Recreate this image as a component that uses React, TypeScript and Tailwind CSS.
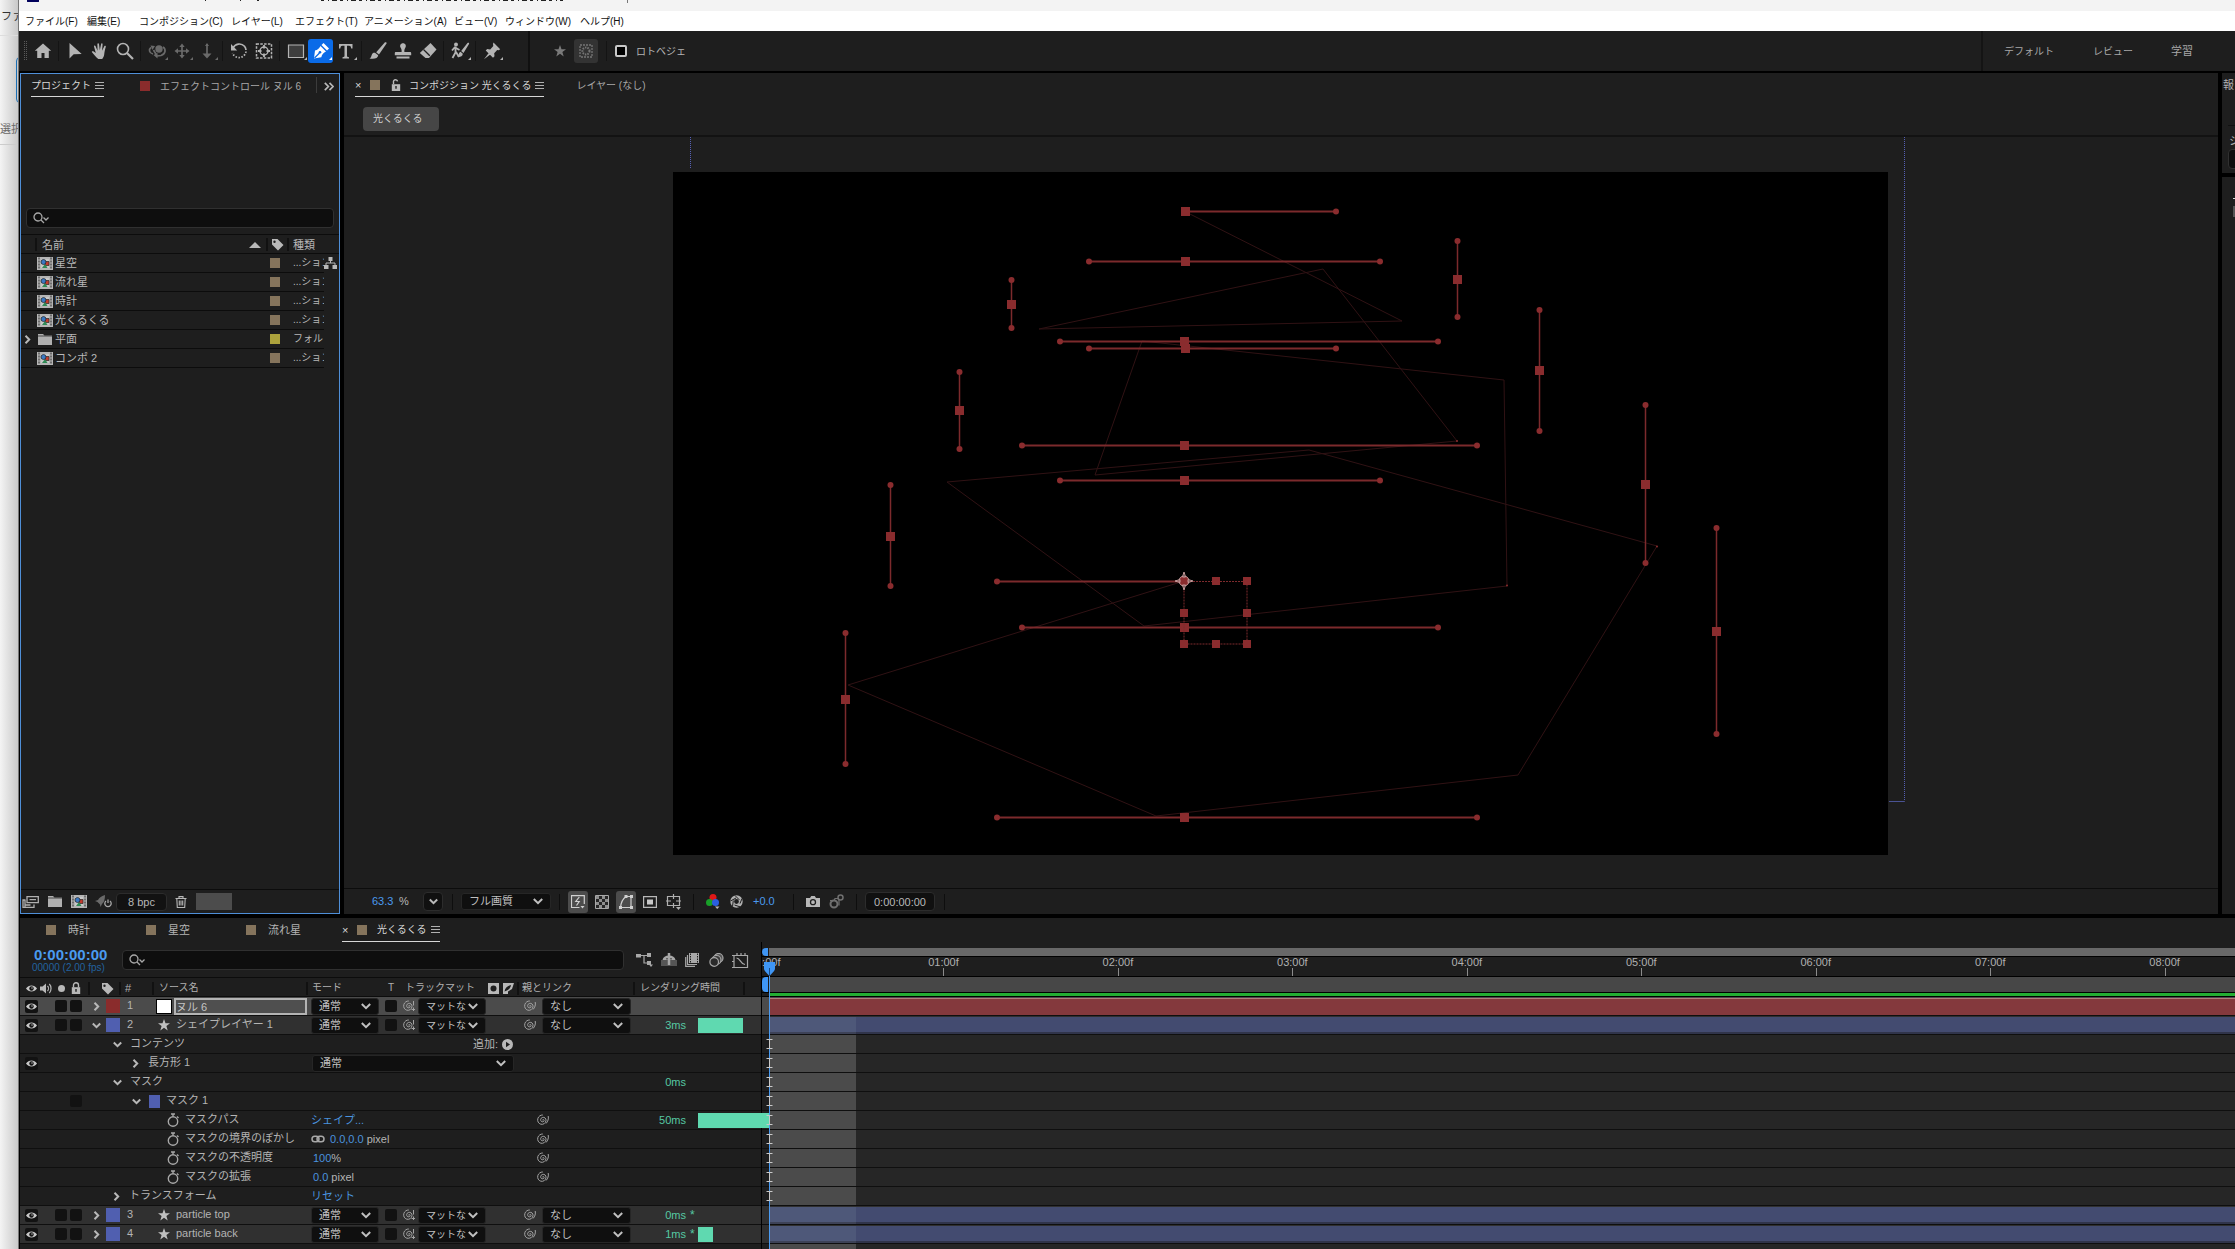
import React, { useState } from 'react';

interface ProjectItem {
  name: string;
  kind: string;
  folder?: boolean;
}

interface Layer {
  id: number;
  name: string;
  open?: boolean;
  isNull?: boolean;
  time?: string;
  cached?: boolean;
  bar?: string;
}

interface IconProps {
  className?: string;
}

const MENUS = [
  { label: 'ファイル(F)', width: 'w-[62px]' },
  { label: '編集(E)', width: 'w-[52px]' },
  { label: 'コンポジション(C)', width: 'w-[92px]' },
  { label: 'レイヤー(L)', width: 'w-[64px]' },
  { label: 'エフェクト(T)', width: 'w-[69px]' },
  { label: 'アニメーション(A)', width: 'w-[90px]' },
  { label: 'ビュー(V)', width: 'w-[51px]' },
  { label: 'ウィンドウ(W)', width: 'w-[75px]' },
  { label: 'ヘルプ(H)', width: 'w-[60px]' },
];

const ITEMS: ProjectItem[] = [
  { name: '星空', kind: '...ション' },
  { name: '流れ星', kind: '...ション' },
  { name: '時計', kind: '...ション' },
  { name: '光くるくる', kind: '...ション' },
  { name: '平面', kind: 'フォル', folder: true },
  { name: 'コンポ 2', kind: '...ション' },
];

const TIMES = ['01:00f', '02:00f', '03:00f', '04:00f', '05:00f', '06:00f', '07:00f', '08:00f'];

// [from, handle, to, fixed coordinate]
const H_HANDLES = [
  [1185, 1185, 1336, 211],
  [1089, 1185, 1380, 261],
  [1060, 1184, 1438, 341],
  [1089, 1185, 1336, 348],
  [1022, 1184, 1477, 445],
  [1060, 1184, 1380, 480],
  [1022, 1184, 1438, 627],
  [997, 1184, 1477, 817],
];

const V_HANDLES = [
  [241, 279, 317, 1457],
  [280, 304, 328, 1011],
  [310, 370, 431, 1539],
  [372, 410, 449, 959],
  [485, 536, 586, 890],
  [405, 484, 563, 1645],
  [528, 631, 734, 1716],
  [633, 699, 764, 845],
];

const BOX_POINTS = [
  [1184, 581], [1216, 581], [1247, 581],
  [1184, 613], [1247, 613],
  [1184, 644], [1216, 644], [1247, 644],
];

const PATH =
  'M1186 212L1402 321L1039 329L1323 269L1457 441L1095 475L1142 341L1504 380L1507 586L1144 626L947 482L1309 450L1657 546L1518 775L1156 816L848 685L1184 581';

const Chevron = ({ open }: { open?: boolean }) => (
  <svg className="size-[9px] shrink-0" viewBox="0 0 9 9" fill="none" stroke="#b8b8b8" strokeWidth="2">
    {open ? <path d="M.8 2.5L4.5 6.2 8.2 2.5" /> : <path d="M2.5.8L6.2 4.5 2.5 8.2" />}
  </svg>
);

const Swatch = ({ className = 'bg-[#85745c]' }: IconProps) => (
  <span className={`block size-[10px] shrink-0 ${className}`} />
);

const Burger = () => (
  <svg className="h-[9px] w-[9px] shrink-0" viewBox="0 0 9 9" stroke="#b0b0b0">
    <path d="M0 1.5h9M0 4.5h9M0 7.5h9" />
  </svg>
);

const SearchIcon = () => (
  <svg className="h-3 w-[17px] shrink-0" viewBox="0 0 17 12" fill="none" stroke="#a8a8a8" strokeWidth="1.3">
    <circle cx="5" cy="5" r="4" />
    <path d="M8 8l3 3M10.5 5.500l2.500 2.500 2.500-2.500" />
  </svg>
);

const EyeIcon = () => (
  <svg className="h-[9px] w-[11px] shrink-0" viewBox="0 0 11 9">
    <path d="M0 4.500C2.500.5 8.500.5 11 4.500 8.500 8.500 2.500 8.500 0 4.500z" fill="#c8c8c8" />
    <circle cx="5.500" cy="4.500" r="2.200" fill="#141414" />
    <circle cx="6" cy="4" r=".7" fill="#c8c8c8" />
  </svg>
);

const TagIcon = () => (
  <svg className="h-[13px] w-[13px] shrink-0" viewBox="0 0 13 13" fillRule="evenodd">
    <path d="M1 1h5.500L12.500 7 7 12.500 1 6.500zM3.500 2.500a1.200 1.200 0 100 2.400 1.200 1.200 0 000-2.400z" fill="#b8b8b8" />
  </svg>
);

const CompIcon = () => (
  <svg className="h-[13px] w-4 shrink-0" viewBox="0 0 16 13">
    <path d="M0 0h16v13H0z" fill="#b5b5b5" />
    <path d="M2 .5v12M14 .5v12" stroke="#262626" strokeWidth="1" strokeDasharray="2 1" />
    <path d="M4 2h8v9H4z" fill="#c9c9c9" />
    <path d="M8 4.500h4v4H8z" fill="#c23b2e" stroke="#2a2a2a" strokeWidth=".7" />
    <path d="M5 11l3-4 2.500 4z" fill="#2f8a55" />
    <circle cx="6.500" cy="5" r="2.500" fill="#3a78c2" stroke="#222" strokeWidth=".7" />
  </svg>
);

const FolderIcon = () => (
  <svg className="h-[11px] w-[14px] shrink-0" viewBox="0 0 14 11" fill="#b0b0b0">
    <path d="M0 0h5l1.500 1.500H14V11H0z" />
    <path d="M0 2h14" stroke="#1e1e1e" strokeWidth=".7" />
  </svg>
);

const Whip = ({ matte }: { matte?: boolean }) => (
  <svg className="size-3 shrink-0" viewBox="0 0 12 12" fill="none" stroke="#a4a4a4">
    <path d="M5.600 6.200c-.2-.9 1.500-1 1.500.3S5.300 8.300 4.300 7.400 3.300 4.200 5.300 3.500s4 .8 3.700 3.200-2.800 4.200-5.200 3.500S.2 7.200.8 4.700 3.800.9 5.800 1" />
    {matte ? <path d="M10.500 1v4.500M10.500 7.500V11M8.500 9.500h3.500" /> : <path d="M11.200 2c.6 2.800-.2 5.500-2.200 7.500" />}
  </svg>
);

const Stopwatch = () => (
  <svg className="h-[14px] w-3 shrink-0" viewBox="0 0 12 14" fill="none" stroke="#a8a8a8" strokeWidth="1.4">
    <circle cx="6" cy="8.500" r="4.700" />
    <path d="M4 1h4M6 1v2.500M10 3.500l1.500 1.500" />
  </svg>
);

const StarIcon = ({ className = '' }: IconProps) => (
  <svg className={`size-3 shrink-0 ${className}`} viewBox="0 0 12 12" fill="currentColor">
    <path d="M6 0l1.500 4.200H12L8.400 6.900 9.700 11.500 6 8.800 2.300 11.500 3.600 6.900 0 4.200h4.500z" />
  </svg>
);

const LockIcon = ({ open }: { open?: boolean }) => (
  <svg className="h-3 w-[10px] shrink-0" viewBox="0 0 10 12">
    <path d={open ? 'M2.500 5V3.200a2 2 0 014-.8' : 'M2.500 5.500V3.200a2.500 2.500 0 015 0v2.300'} fill="none" stroke="#b8b8b8" strokeWidth="1.4" />
    <path d="M.8 5.200h8.400V12H.8z" fill="#b8b8b8" />
    <path d="M5 7v2.800" stroke="#1e1e1e" strokeWidth="1.400" />
  </svg>
);

const Select = ({ label, value, className, small }: {
  label: string; value: string; className: string; small?: boolean;
}) => (
  <div className={`relative h-[17px] shrink-0 ${className}`}>
    <select
      aria-label={label}
      className={`block h-full w-full appearance-none overflow-hidden rounded-[3px] border border-[#262626] bg-[#0f0f0f] pl-[7px] leading-[15px] text-[#c0c0c0] outline-none ${
        small ? 'text-[10px]' : 'text-[11px]'
      }`}
    >
      <option>{value}</option>
    </select>
    <svg className="pointer-events-none absolute top-[5px] right-2 h-[7px] w-[10px]" viewBox="0 0 10 7" fill="none" stroke="#c0c0c0" strokeWidth="2">
      <path d="M.8 1L5 5.200 9.200 1" />
    </svg>
  </div>
);

const Tool = ({ label, dim, active, more, children }: {
  label: string; dim?: boolean; active?: boolean; more?: boolean; children: React.ReactNode;
}) => (
  <button
    aria-label={label}
    className={`flex h-6 w-[25px] shrink-0 items-center justify-center rounded-[3px] ${
      active ? 'bg-[#0a6be8] text-white' : dim ? 'text-[#6a6a6a]' : 'text-[#b4b4b4]'
    }`}
  >
    <svg className="size-5 overflow-visible" viewBox="0 0 20 20" fill="currentColor">
      {children}
      {more && <path d="M21 16v3h-3z" />}
    </svg>
  </button>
);

const ToolGap = () => (
  <span className="flex h-5 w-[7px] shrink-0 justify-center">
    <span className="w-px bg-[#141414]" />
  </span>
);

const HeadSep = () => <span className="h-[13px] w-[2px] shrink-0 bg-[#111]" />;

const Toolbar = () => {
  const [rotoBezier, setRotoBezier] = useState(false);
  return (
    <div className="flex h-10 items-center bg-[#1e1e1e]">
      <svg className="ml-[5px] h-5 w-[3px]" viewBox="0 0 3 20" stroke="#5a5a5a">
        <path d="M.5 0v20M2.500 0v20" strokeDasharray="1 1" />
      </svg>
      <span className="w-[3px]" />
      <Tool label="ホーム">
        <path d="M10 2.500l-8.200 7.200h2.400V17h4.300v-5h3v5h4.300V9.700h2.400z" />
      </Tool>
      <ToolGap />
      <Tool label="選択ツール">
        <path d="M4.500 2v15.500l4.200-4.300 8-.2z" />
      </Tool>
      <Tool label="手のひらツール">
        <path d="M8.300 18c-2.500-1.500-4.300-4.500-6.300-6.700-.6-.8.500-1.500 1.300-1l2.500 1.800L4 5.500c-.2-1 1.100-1.300 1.500-.4l2 4.600L7.400 3c0-1 1.500-1.100 1.600 0l.8 6.300 1.300-6.400c.2-1 1.600-.8 1.500.2l-.5 6.700 2.300-4.700c.5-.9 1.700-.3 1.400.6-1 3.300-1.300 5.300-1.600 7.800-.3 2-1 3.300-2 4.500z" />
      </Tool>
      <Tool label="ズームツール">
        <circle cx="8" cy="8" r="5.500" fill="none" stroke="currentColor" strokeWidth="1.600" />
        <path d="M12 12l6 6" stroke="currentColor" strokeWidth="2.200" />
      </Tool>
      <ToolGap />
      <Tool label="カメラの周回" dim more>
        <path d="M6 13C2 12 1.500 8.500 4 6.500M6.500 9l3 5M16 6c3 2 3 7-2 8.500l-4 .5" fill="none" stroke="currentColor" strokeWidth="1.700" />
        <path d="M3.500 4.500l4.500.5-2.500 4zM10.500 12v5.500L6.500 14z" />
        <circle cx="12" cy="8" r="3.700" />
      </Tool>
      <Tool label="カメラのパン" dim more>
        <path d="M10 5v10M5 10h10" stroke="currentColor" strokeWidth="1.700" />
        <path d="M10 2.500l2.700 3.500H7.300zM10 17.500l2.700-3.500H7.300zM2.500 10L6 7.300v5.400zM17.500 10L14 7.300v5.400z" />
      </Tool>
      <Tool label="カメラのドリー" dim more>
        <path d="M10 3v11" stroke="currentColor" strokeWidth="1.700" />
        <path d="M10 17.500l4.500-5h-9zM10 2l2 3H8z" />
      </Tool>
      <ToolGap />
      <Tool label="回転ツール">
        <path d="M4 7a7 7 0 0111.500-1.700A7 7 0 0117 9" fill="none" stroke="currentColor" strokeWidth="1.700" />
        <path d="M17 10.500A7 7 0 013.500 12" fill="none" stroke="currentColor" strokeWidth="1.700" strokeDasharray="1.500 1.500" />
        <path d="M2 3v6.500h6.200z" />
      </Tool>
      <Tool label="アンカーポイントツール">
        <path d="M2.500 3h15v14h-15z" fill="none" stroke="currentColor" strokeWidth="1.500" strokeDasharray="2.500 1.300" />
        <circle cx="10" cy="10" r="4" fill="none" stroke="currentColor" strokeWidth="1.500" />
        <path d="M10 4v3.500M10 12.500V16M4 10h3.500M12.500 10H16" stroke="currentColor" strokeWidth="1.800" />
      </Tool>
      <ToolGap />
      <Tool label="長方形ツール" more>
        <path d="M2.500 4h15v12.500h-15z" fill="#3e3e3e" stroke="currentColor" strokeWidth="1.200" />
      </Tool>
      <Tool label="ペンツール" active more>
        <path d="M3 17.500L4 9.500c2.500-.5 4-2 5.500-4.500l5.500 5.500c-2.500 1.300-4 3-4.700 5.700z" />
        <path d="M10.500 4l2-2 5.500 5.500-2 2z" />
        <path d="M3.500 17l5-5" stroke="#0a6be8" strokeWidth="1.200" />
        <circle cx="9" cy="11.300" r="1.300" fill="#0a6be8" />
      </Tool>
      <Tool label="文字ツール" more>
        <path d="M3 3h13.500v4.500h-1.300c-.3-2-.8-2.700-2.200-2.700h-2v10c0 1 .5 1.300 2 1.400v1.300H6.500v-1.300c1.500-.1 2-.4 2-1.400v-10h-2c-1.400 0-1.900.7-2.200 2.700H3z" />
      </Tool>
      <ToolGap />
      <Tool label="ブラシツール">
        <path d="M18.500 2.500L11 13.500l-2.800-2.200L16.500 1.700c1-.8 2.500-.2 2 .8z" />
        <path d="M7.300 12l2.900 2.300C10 17.500 6 18.500 1.500 17.500c2.300-1 1.700-4 3.300-5.200.8-.6 1.700-.6 2.500-.3z" />
      </Tool>
      <Tool label="コピースタンプツール">
        <path d="M8.600 11c.2-1.600-.1-3-.9-4.200-1.400-2.200 0-4.600 2.300-4.600s3.700 2.400 2.300 4.600c-.8 1.200-1.100 2.600-.9 4.200H17c.8 0 1.200.5 1.200 1.200v2H1.800v-2c0-.7.4-1.200 1.200-1.200zM3.500 15.500h13v2h-13z" />
      </Tool>
      <Tool label="消しゴムツール">
        <path d="M12.500 2l6 6.500-7.500 8.500H7.500L1.800 12z" />
        <path d="M5.500 8.500l6.300 6.200" stroke="#1e1e1e" strokeWidth="1.300" />
      </Tool>
      <ToolGap />
      <Tool label="ロトブラシツール" more>
        <circle cx="6" cy="3.500" r="2" />
        <path d="M5 6l-3 3.500M5.500 5.500v6l-3 5.500M6 11l3 5M6 7l3.500 2" fill="none" stroke="currentColor" strokeWidth="1.800" />
        <path d="M19 3l-5.500 9-2.300-2L17.500 2c1-.6 2 0 1.500 1zM10.500 10.800l2.300 2c0 2.500-2.800 3.700-5.500 3.200 1.700-1.200 1-4.500 3.200-5.200z" />
      </Tool>
      <ToolGap />
      <Tool label="パペットピンツール" more>
        <path d="M11.500 1.500l6.700 6.800-1.500 1-1.500-.3-3 3.300.3 3-1.500 1.400L3.700 9.500l1.500-1.500 3 .5L11.300 5 11 3zM6.500 12.200l1.500 1.500-6 4.600z" />
      </Tool>
      <span className="ml-6 h-full w-[2px] bg-[#101010]" />
      <StarIcon className="ml-6 text-[#7a7a7a]" />
      <button aria-label="マスクを作成" className="ml-2 flex h-6 w-6 items-center justify-center rounded-[3px] bg-[#333]">
        <svg className="size-[14px]" viewBox="0 0 14 14" fill="none" stroke="#757575">
          <path d="M1 1h12v12H1z" strokeWidth="1.300" strokeDasharray="2 1" />
          <circle cx="7" cy="7" r="3.500" strokeWidth="2" strokeDasharray="1.500 1" />
        </svg>
      </button>
      <span className="ml-2 h-5 w-px bg-[#141414]" />
      <label className="ml-2 flex items-center gap-[9px] text-[10px] text-[#b4b4b4]">
        <input
          type="checkbox"
          checked={rotoBezier}
          onChange={(e) => setRotoBezier(e.target.checked)}
          className="size-3 appearance-none rounded-[2px] border-2 border-[#c8c8c8] bg-black checked:bg-[#0a6be8]"
        />
        ロトベジェ
      </label>
      <div className="ml-auto flex h-full w-[254px] items-center border-l-2 border-[#141414] pl-[21px] text-[10px] text-[#a8a8a8]">
        <button className="w-[89px] text-left">デフォルト</button>
        <button className="w-[78px] text-left">レビュー</button>
        <button className="text-left text-[11px]">学習</button>
      </div>
    </div>
  );
};

const ProjectPanel = () => (
  <section className="flex w-[320px] shrink-0 flex-col border border-[#4f8fd8] bg-[#1e1e1e] text-[11px] text-[#b8b8b8]">
    <div className="flex h-[23px] items-end text-[10px]">
      <button className="ml-[10px] flex h-[22px] items-center gap-1 border-b border-[#d8d8d8] text-[#d8d8d8]">
        プロジェクト
        <Burger />
      </button>
      <button className="ml-9 flex h-[22px] items-center gap-[10px] whitespace-nowrap text-[#a8a8a8]">
        <Swatch className="bg-[#8a2c2c]" />
        エフェクトコントロール ヌル 6
      </button>
      <span className="mb-1 ml-auto h-4 w-px bg-[#3c3c3c]" />
      <button aria-label="その他のパネル" className="mr-[5px] ml-[7px] flex h-[22px] items-center">
        <svg className="h-[9px] w-[10px]" viewBox="0 0 10 9" fill="none" stroke="#b8b8b8" strokeWidth="1.700">
          <path d="M.8.8l3.600 3.700L.8 8.200M5.500.8l3.600 3.700-3.600 3.700" />
        </svg>
      </button>
    </div>
    <label className="mx-[5px] mt-[111px] flex h-5 items-center rounded-[4px] border border-[#303030] bg-[#0e0e0e] pl-[6px]">
      <SearchIcon />
      <input aria-label="プロジェクトを検索" className="min-w-0 flex-1 bg-transparent outline-none" />
    </label>
    <div className="relative mt-[6px]">
      <table className="w-full table-fixed border-collapse">
        <colgroup>
          <col />
          <col className="w-[27px]" />
          <col className="w-[31px]" />
          <col className="w-[15px]" />
        </colgroup>
        <thead>
          <tr className="h-[19px] border-y border-[#0c0c0c]">
            <th className="p-0 pt-px text-left font-normal">
              <span className="flex items-center pl-[14px]">
                <HeadSep />
                <span className="ml-[5px] leading-4">名前</span>
                <svg className="mr-[5px] ml-auto h-[6px] w-3" viewBox="0 0 12 6" fill="#b8b8b8">
                  <path d="M6 0l6 6H0z" />
                </svg>
              </span>
            </th>
            <th className="p-0">
              <span className="flex items-center gap-[3px]">
                <HeadSep />
                <TagIcon />
                <HeadSep />
              </span>
            </th>
            <th className="p-0 pt-px text-left font-normal leading-4">種類</th>
            <th className="p-0" />
          </tr>
        </thead>
        <tbody>
          {ITEMS.map((item) => (
            <tr key={item.name} className="h-[19px]">
              <td className="border-b border-[#0c0c0c] p-0">
                <span className="flex h-[18px] items-center">
                  <span className="mr-[3px] flex w-[13px] justify-center">{item.folder && <Chevron />}</span>
                  <span className="mr-[2px] flex w-4 justify-center">{item.folder ? <FolderIcon /> : <CompIcon />}</span>
                  <span className="leading-4">{item.name}</span>
                </span>
              </td>
              <td className="border-b border-[#0c0c0c] p-0 pl-1">
                <Swatch className={item.folder ? 'bg-[#aca23c]' : 'bg-[#85745c]'} />
              </td>
              <td className="overflow-hidden border-b border-[#0c0c0c] p-0 text-[10px] leading-4 whitespace-nowrap">{item.kind}</td>
              <td className="p-0" />
            </tr>
          ))}
        </tbody>
      </table>
      <svg className="absolute top-[23px] right-[2px] h-3 w-[13px]" viewBox="0 0 13 12" fill="#b8b8b8">
        <path d="M4.500 0h4v4h-4zM0 8h4.500v4H0zM8.500 8H13v4H8.500z" />
        <path d="M6.500 4v2M2 8.500V6h9v2.500" fill="none" stroke="#b8b8b8" />
      </svg>
    </div>
    <div className="mt-auto flex h-6 items-center border-t border-[#0c0c0c] pl-px">
      <svg className="h-3 w-[17px]" viewBox="0 0 17 12" fill="none" stroke="#b0b0b0" strokeWidth="1.300">
        <path d="M5 .7h11.300v6H5zM7.500 3.600h6.500" />
        <path d="M3.500 4H1v7.300h11V8.500M3 4v7M3.500 9h5" />
      </svg>
      <span className="ml-[9px]"><FolderIcon /></span>
      <span className="ml-[9px]"><CompIcon /></span>
      <svg className="ml-2 h-[13px] w-[17px]" viewBox="0 0 17 13">
        <path d="M10 0C6 1 4 3 3 5L0 6l2.500 1L5 9.500 5.500 12 7 9c2-1.500 3-4.500 3-9z" fill="#6a6a6a" />
        <path d="M11 6a3.200 3.200 0 104 0M13 4.500V8" fill="none" stroke="#a8a8a8" strokeWidth="1.300" />
      </svg>
      <button className="ml-1 h-[18px] w-[51px] rounded-[4px] border border-[#2c2c2c] bg-[#121212] text-[11px] leading-4">8 bpc</button>
      <svg className="ml-2 h-3 w-3" viewBox="0 0 12 12" fill="none" stroke="#b8b8b8" strokeWidth="1.100">
        <path d="M.5 2.500h11M4 2V.6h4V2M1.800 2.500l.5 9h7.400l.5-9M4.300 4.500v5M6 4.500v5M7.700 4.500v5" />
      </svg>
      <span className="ml-[9px] h-[17px] w-9 bg-[#4c4c4c]" />
    </div>
  </section>
);

const Stage = () => (
  <svg className="h-auto w-[1216px] max-w-full shrink-0 overflow-visible" viewBox="673 172 1216 683" fill="#8a2c2e">
    <path d="M673 172h1215v683H673z" fill="#000" />
    <path d="M690.500 137v32M1904.500 137v664.500" stroke="#5560b4" strokeDasharray="1 1" fill="none" />
    <path d="M1904.500 801.500H1889" stroke="#4a5394" fill="none" />
    <path d={PATH} fill="none" stroke="#301214" />
    {H_HANDLES.map(([from, mid, to, y], i) => (
      <g key={i}>
        <path d={`M${from} ${y + 0.5}H${to}`} stroke="#7c2a2c" strokeWidth="2" />
        {from !== mid && <circle cx={from} cy={y + 0.5} r="3" />}
        <circle cx={to} cy={y + 0.5} r="3" />
        <rect x={mid - 4} y={y - 4} width="9" height="9" />
      </g>
    ))}
    {V_HANDLES.map(([from, mid, to, x]) => (
      <g key={x}>
        <path d={`M${x + 0.5} ${from}V${to}`} stroke="#7c2a2c" strokeWidth="1.500" />
        <circle cx={x + 0.5} cy={from} r="3" />
        <circle cx={x + 0.5} cy={to} r="3" />
        <rect x={x - 4} y={mid - 4} width="9" height="9" />
      </g>
    ))}
    <path d="M997 581.500H1184" stroke="#7c2a2c" strokeWidth="2" />
    <circle cx="997" cy="581.500" r="3" />
    <path d="M1184 581.500h63v62.500h-63z" fill="none" stroke="#7c2a2c" strokeDasharray="2 1" />
    {BOX_POINTS.map(([x, y]) => (
      <rect key={`${x}-${y}`} x={x - 4} y={y - 4} width="8" height="8" />
    ))}
    <circle cx="1457" cy="441" r="1" />
    <circle cx="1507" cy="585.500" r="1" />
    <circle cx="1657" cy="546.500" r="1" />
    <g fill="none" stroke="#c79c9c">
      <circle cx="1184" cy="581" r="5" />
      <path d="M1184 572l1.500 5h-3zM1184 590l1.500-5h-3zM1175 581l5-1.500v3zM1193 581l-5-1.500v3z" />
    </g>
  </svg>
);

const ViewSep = ({ className = '' }: IconProps) => <span className={`h-4 w-px bg-[#0e0e0e] ${className}`} />;

const CompPanel = () => (
  <section className="flex min-w-0 flex-1 flex-col bg-[#1e1e1e] text-[#b8b8b8]">
    <div className="flex h-[24px] items-end text-[10px]">
      <div className="ml-[11px] flex h-[23px] items-center border-b border-[#d8d8d8] text-[#d8d8d8]">
        <button className="w-[15px] text-left text-[11px]">×</button>
        <Swatch />
        <span className="ml-[11px]"><LockIcon open /></span>
        <span className="mr-1 ml-2">コンポジション 光くるくる</span>
        <Burger />
      </div>
      <button className="ml-8 h-[23px] text-[#a8a8a8]">レイヤー (なし)</button>
    </div>
    <div className="h-10 border-b-2 border-[#121212] pt-2 pl-[19px]">
      <button className="h-6 w-[76px] rounded-[4px] bg-[#464646] pl-[10px] text-left text-[10px] text-[#d0d0d0]">光くるくる</button>
    </div>
    <div className="flex min-h-0 flex-1 items-center justify-center overflow-hidden pt-[2px]">
      <Stage />
    </div>
    <div className="flex h-[26px] shrink-0 items-center border-t border-[#0c0c0c] text-[11px]">
      <span className="ml-7 w-[27px] text-[#4a9bf0]">63.3</span>
      <span className="w-[10px]">%</span>
      <button aria-label="拡大率" className="ml-[14px] flex h-[19px] w-5 items-center justify-center rounded-[4px] border border-[#2c2c2c] bg-[#101010]">
        <Chevron open />
      </button>
      <ViewSep className="ml-[9px]" />
      <Select label="解像度" value="フル画質" className="ml-2 w-[90px]" />
      <ViewSep className="ml-2" />
      <div className="ml-2 flex items-center gap-[7px]">
        <button aria-label="高速プレビュー" className="flex h-[22px] w-5 items-center justify-center rounded-[3px] bg-[#4c4c4c]">
          <svg className="size-[14px]" viewBox="0 0 14 14" fill="none" stroke="#d0d0d0" strokeWidth="1.200">
            <path d="M8.500 12.500h-8V.7h12.800V9" />
            <path d="M8.300 2L4.800 6.500h3.400L5.500 10.500" />
            <path d="M9.500 11h4l-2 2.500z" fill="#d0d0d0" stroke="none" />
          </svg>
        </button>
        <svg className="size-[14px]" viewBox="0 0 14 14">
          <path d="M.5.500h13v13H.5z" fill="#262626" stroke="#a8a8a8" />
          <path d="M1 1h3v3H1zM7 1h3v3H7zM4 4h3v3H4zM10 4h3v3h-3zM1 7h3v3H1zM7 7h3v3H7zM4 10h3v3H4zM10 10h3v3h-3z" fill="#8f8f8f" />
        </svg>
        <button aria-label="マスクの表示" className="flex h-[22px] w-5 items-center justify-center rounded-[3px] bg-[#4c4c4c]">
          <svg className="size-[14px]" viewBox="0 0 14 14" fill="none" stroke="#d0d0d0" strokeWidth="1.200">
            <path d="M1.500 12.500C2 7 3.500 4 7 1.500h5v11z" />
            <path d="M0 11h3v3H0zM5.500 0h3v3h-3zM11 0h3v3h-3zM11 11h3v3h-3z" fill="#d0d0d0" stroke="none" />
          </svg>
        </button>
        <svg className="h-3 w-[14px]" viewBox="0 0 14 12">
          <path d="M.6.600h12.800v10.800H.6z" fill="none" stroke="#b8b8b8" strokeWidth="1.200" />
          <path d="M4 3.500h6v5H4z" fill="#c8c8c8" />
        </svg>
        <svg className="ml-[2px] h-4 w-[15px]" viewBox="0 0 15 16" fill="none" stroke="#b0b0b0" strokeWidth="1.200">
          <path d="M1.500 2.500h12v9h-12zM7.500 0v5M7.500 9v5M0 7h5M10 7h5" />
          <path d="M10 13h5l-2.500 3z" fill="#b0b0b0" stroke="none" />
        </svg>
      </div>
      <ViewSep className="ml-3" />
      <svg className="ml-3 h-[15px] w-[14px]" viewBox="0 0 14 15">
        <circle cx="7" cy="3.500" r="3.500" fill="#e01818" />
        <circle cx="3.500" cy="8.500" r="3.500" fill="#18a028" />
        <circle cx="9.500" cy="8.500" r="3.500" fill="#2a5fe0" />
        <path d="M9 12.500h4.500L11.200 15z" fill="#b8b8b8" />
      </svg>
      <svg className="ml-[10px] size-[13px]" viewBox="0 0 13 13" fill="none">
        <circle cx="6.500" cy="6.500" r="4.300" stroke="#b0b0b0" strokeWidth="3.800" />
        <path d="M5 .5l4.300 4.300M12 3.500l-2 5M10.500 12L4.500 10M2.500 11.500l.8-6M.5 6L6 3" stroke="#1e1e1e" />
      </svg>
      <span className="ml-[10px] w-[22px] text-[#4a9bf0]">+0.0</span>
      <ViewSep className="ml-[18px]" />
      <svg className="ml-3 h-[11px] w-[14px]" viewBox="0 0 14 11">
        <path d="M0 2h4l1.200-2h3.600L10 2h4v9H0z" fill="#b8b8b8" />
        <circle cx="7" cy="6.200" r="2.500" fill="none" stroke="#1e1e1e" strokeWidth="1.300" />
      </svg>
      <svg className="ml-[9px] h-[15px] w-[15px]" viewBox="0 0 15 15" fill="none" stroke="#707070" strokeWidth="2">
        <circle cx="5" cy="10" r="3.500" />
        <path d="M1 6.500h4l1-2h3l1 2v5" strokeWidth="1.200" />
        <circle cx="11.500" cy="3.500" r="2.500" strokeWidth="1.500" />
      </svg>
      <ViewSep className="ml-3" />
      <button className="ml-2 h-[19px] w-[70px] rounded-[4px] border border-[#2c2c2c] bg-[#101010] text-[11px] leading-4">0:00:00:00</button>
      <ViewSep className="ml-[9px]" />
    </div>
  </section>
);

const SidePanels = () => (
  <aside className="flex w-[13px] shrink-0 flex-col gap-1 overflow-hidden text-[11px] text-[#b0b0b0]">
    <div className="h-[100px] bg-[#1e1e1e] pt-1 pl-px">
      <div className="h-[48px] leading-4 whitespace-nowrap">報</div>
      <div className="ml-[5px] h-2 w-4 border-t border-[#111]" />
      <div className="ml-[6px] h-4 leading-4 whitespace-nowrap">シ</div>
      <div className="ml-[5px] h-5 w-8 rounded-[4px] border border-[#303030] bg-[#0e0e0e]" />
    </div>
    <div className="flex-1 bg-[#1e1e1e] pt-[21px] pl-[11px]">
      <div className="h-px w-2 bg-[#d8d8d8]" />
      <div className="mt-[7px] h-[11px] w-2 bg-[#555]" />
    </div>
  </aside>
);

const Lamp = ({ shown = true }: { shown?: boolean }) => (
  <span className={`size-3 shrink-0 rounded-[2px] ${shown ? 'bg-[#121212]' : ''}`} />
);

const Switches = ({ eye, boxes, lock }: { eye?: boolean; boxes?: boolean; lock?: boolean }) => (
  <span className="flex w-[68px] shrink-0 items-center gap-[3px] pl-[5px]">
    <span className={`mr-[14px] flex size-[13px] items-center justify-center rounded-[2px] ${eye ? 'bg-[#121212]' : ''}`}>
      {eye && <EyeIcon />}
    </span>
    <Lamp shown={!!boxes} />
    <Lamp shown={!!boxes || !!lock} />
  </span>
);

const ROW = 'flex h-[19px] items-center border-b border-[#0f0f0f]';

const LayerRow = ({ layer }: { layer: Layer }) => (
  <div className={`${ROW} ${layer.isNull ? 'bg-[#4b4b4b]' : 'bg-[#303030]'}`}>
    <Switches eye boxes />
    <span className="flex w-[18px] shrink-0 justify-center pr-px"><Chevron open={layer.open} /></span>
    <span className={`h-[14px] w-[14px] shrink-0 ${layer.isNull ? 'bg-[#8a2c2c]' : 'bg-[#505fb0]'}`} />
    <span className="w-5 shrink-0 pb-[2px] text-center">{layer.id}</span>
    <span className="flex w-[34px] shrink-0 justify-end pr-[2px]">
      {layer.isNull ? <span className="h-[15px] w-4 border border-black bg-white" /> : <StarIcon className="mr-[2px] text-[#c0c0c0]" />}
    </span>
    {layer.isNull ? (
      <input
        aria-label="レイヤー名"
        defaultValue={layer.name}
        className="h-[17px] w-[133px] shrink-0 border-2 border-[#b4b4b4] bg-[#4f4f4f] text-[11px] leading-[13px] text-[#c4c4c4] outline-none"
      />
    ) : (
      <span className="w-[133px] shrink-0 pb-[2px] pl-[2px] whitespace-nowrap">{layer.name}</span>
    )}
    <Select label="描画モード" value="通常" className="ml-1 w-[68px]" />
    <span className="ml-[6px] flex"><Lamp /></span>
    <span className="ml-[6px]"><Whip matte /></span>
    <Select label="トラックマット" value="マットな" small className="ml-[3px] w-[68px]" />
    <span className="ml-[38px]"><Whip /></span>
    <Select label="親とリンク" value="なし" className="ml-[6px] w-[89px]" />
    <RenderTime time={layer.time} cached={layer.cached} bar={layer.bar} />
  </div>
);

const RenderTime = ({ time, cached, bar }: { time?: string; cached?: boolean; bar?: string }) => (
  <span className="flex shrink-0 items-center text-[#56c9a3]">
    <span className="w-[55px] text-right">{time}</span>
    <span className="w-3 pl-1 text-[12px]">{cached && '*'}</span>
    {bar && <span className={`relative z-10 h-[15px] bg-[#5fd9b0] ${bar}`} />}
  </span>
);

const PropertyRow = ({ name, indent, open, stopwatch, swatch, eye, lock, time, bar, noTwirl, whip, children }: {
  name: string; indent: string; open?: boolean; stopwatch?: boolean; swatch?: boolean; eye?: boolean; lock?: boolean;
  time?: string; bar?: string; noTwirl?: boolean; whip?: boolean; children?: React.ReactNode;
}) => (
  <div className={ROW}>
    <Switches eye={eye} lock={lock} />
    <span className={`flex w-[223px] shrink-0 items-center whitespace-nowrap ${indent}`}>
      {!noTwirl && <Chevron open={open} />}
      {stopwatch && <Stopwatch />}
      {swatch && <span className="ml-2 h-[13px] w-[11px] bg-[#505fb0]" />}
      <span className={`pb-[3px] ${stopwatch || swatch ? 'ml-[6px]' : 'ml-2'}`}>{name}</span>
    </span>
    <span className="flex w-[226px] shrink-0 items-center">{children}</span>
    <span className="w-[94px] shrink-0">{whip && <Whip />}</span>
    <RenderTime time={time} bar={bar} />
  </div>
);

const Value = ({ children }: { children: React.ReactNode }) => <span className="text-[#4a93de]">{children}</span>;

const LayerColumn = () => (
  <div className="w-[741px] shrink-0">
    <div className="flex h-[35px] items-center">
      <div className="w-[102px] shrink-0 pl-3">
        <div className="pl-[2px] text-[15px] leading-[15px] font-bold text-[#4a9bf0]">0:00:00:00</div>
        <div className="text-[10px] leading-[11px] whitespace-nowrap text-[#22629f]">00000 (2.00 fps)</div>
      </div>
      <label className="flex h-5 w-[502px] items-center rounded-[4px] border border-[#303030] bg-[#0e0e0e] pl-[6px]">
        <SearchIcon />
        <input aria-label="レイヤーを検索" className="min-w-0 flex-1 bg-transparent outline-none" />
      </label>
      <div className="ml-3 flex items-center gap-2 text-[#a8a8a8]">
        <svg className="h-[14px] w-[17px]" viewBox="0 0 17 14" fill="currentColor">
          <path d="M0 1h5v3.500H0zM11 0h4v4h-4zM11 8h4v4h-4zM13 11.500h4L15 14z" />
          <path d="M5 2.500h6M8 2.500V10h3" fill="none" stroke="currentColor" strokeWidth="1.200" />
        </svg>
        <svg className="h-[13px] w-4" viewBox="0 0 16 13">
          <path d="M0 7h16v6H0z" fill="#555" />
          <path d="M1.500 7C2 4 4.500 2.500 8 2.500S14 4 14.500 7z" fill="#a8a8a8" />
          <path d="M8 0v12M5.500 5.500h5" stroke="#a8a8a8" strokeWidth="2.500" />
          <path d="M6 5v1.500M10 5v1.500" stroke="#1e1e1e" />
        </svg>
        <svg className="h-[14px] w-[14px]" viewBox="0 0 14 14">
          <path d="M4 0h10v10H4z" fill="#a8a8a8" />
          <path d="M5.500.5v9M12.500.5v9" stroke="#1e1e1e" strokeDasharray="1.500 1" />
          <path d="M2.500 2v9.500H12M.7 4v9.300H10" fill="none" stroke="#a8a8a8" strokeWidth="1.200" />
        </svg>
        <svg className="ml-[2px] h-[14px] w-[15px]" viewBox="0 0 15 14" fill="none" stroke="currentColor" strokeWidth="1.200">
          <circle cx="9.500" cy="5" r="4.500" fill="#555" />
          <circle cx="7.500" cy="7" r="4.500" fill="#3a3a3a" />
          <circle cx="5.200" cy="9" r="4.300" fill="#2a2a2a" />
        </svg>
        <svg className="h-4 w-[17px]" viewBox="0 0 17 16" fill="none" stroke="currentColor" strokeWidth="1.200">
          <path d="M2 3.500h13.500v12H2zM0 3.500h2M0 9.500h2M0 15.500h2M5 1v2M9 1v2M13 1v2M4.500 6c4 0 3.500 6 8.500 6.500" />
        </svg>
      </div>
    </div>
    <div className="flex h-5 items-center border-y border-[#0c0c0c] pt-[2px] text-[10px] whitespace-nowrap text-[#b0b0b0]">
      <span className="flex w-[68px] items-center gap-[3px] pl-[6px]">
        <EyeIcon />
        <svg className="h-[11px] w-3" viewBox="0 0 12 11" fill="#b8b8b8">
          <path d="M0 3.500h2.500L6 .5v10l-3.500-3H0z" />
          <path d="M7.500 3c1.300 1.300 1.300 3.700 0 5M9.300 1c2.300 2.300 2.300 6.700 0 9" fill="none" stroke="#b8b8b8" strokeWidth="1.200" />
        </svg>
        <span className="mx-[3px] size-[7px] rounded-full bg-[#b8b8b8]" />
        <LockIcon />
      </span>
      <HeadSep />
      <span className="ml-[11px] w-[18px]"><TagIcon /></span>
      <HeadSep />
      <span className="ml-1 w-[27px] text-[11px]">#</span>
      <HeadSep />
      <span className="ml-[5px] w-[147px]">ソース名</span>
      <HeadSep />
      <span className="ml-1 w-[76px]">モード</span>
      <span className="w-[17px]">T</span>
      <span className="w-[83px]">トラックマット</span>
      <svg className="h-[11px] w-[26px]" viewBox="0 0 26 11">
        <path d="M0 0h11v11H0zM15 0h11L24 6l-4 2.500V11h-5z" fill="#b8b8b8" />
        <circle cx="5.500" cy="5.500" r="3" fill="#1e1e1e" />
        <path d="M16.500 8.500C17 5 19.500 3 23 2c-.5 3-2.500 5.500-6.500 6.500z" fill="#1e1e1e" />
      </svg>
      <span className="mx-[3px] flex"><HeadSep /></span>
      <span className="w-[111px]">親とリンク</span>
      <HeadSep />
      <span className="ml-[5px] w-[103px]">レンダリング時間</span>
      <HeadSep />
    </div>
    <LayerRow layer={{ id: 1, name: 'ヌル 6', isNull: true }} />
    <LayerRow layer={{ id: 2, name: 'シェイプレイヤー 1', open: true, time: '3ms', bar: 'w-[45px]' }} />
    <PropertyRow name="コンテンツ" indent="pl-[25px]" open>
      <button className="ml-[162px] flex items-center gap-1">
        追加:
        <svg className="size-[11px]" viewBox="0 0 11 11">
          <circle cx="5.500" cy="5.500" r="5.500" fill="#b8b8b8" />
          <path d="M4 2.700l4 2.800-4 2.800z" fill="#1e1e1e" />
        </svg>
      </button>
    </PropertyRow>
    <PropertyRow name="長方形 1" indent="pl-[43px]" eye>
      <Select label="合成モード" value="通常" className="ml-px w-[202px]" />
    </PropertyRow>
    <PropertyRow name="マスク" indent="pl-[25px]" open time="0ms" />
    <PropertyRow name="マスク 1" indent="pl-[44px]" open swatch lock />
    <PropertyRow name="マスクパス" indent="pl-[79px]" noTwirl stopwatch whip time="50ms" bar="w-[71px]">
      <Value>シェイプ...</Value>
    </PropertyRow>
    <PropertyRow name="マスクの境界のぼかし" indent="pl-[79px]" noTwirl stopwatch whip>
      <svg className="mr-[5px] h-2 w-[14px]" viewBox="0 0 14 8" fill="none" stroke="#a8a8a8" strokeWidth="1.500">
        <rect x="1" y="1.200" width="7" height="5.600" rx="2.800" />
        <rect x="6" y="1.200" width="7" height="5.600" rx="2.800" />
      </svg>
      <Value>0.0,0.0</Value>&nbsp;pixel
    </PropertyRow>
    <PropertyRow name="マスクの不透明度" indent="pl-[79px]" noTwirl stopwatch whip>
      <span className="pl-[2px]"><Value>100</Value>%</span>
    </PropertyRow>
    <PropertyRow name="マスクの拡張" indent="pl-[79px]" noTwirl stopwatch whip>
      <span className="pl-[2px]"><Value>0.0</Value> pixel</span>
    </PropertyRow>
    <PropertyRow name="トランスフォーム" indent="pl-[24px]">
      <button><Value>リセット</Value></button>
    </PropertyRow>
    <LayerRow layer={{ id: 3, name: 'particle top', time: '0ms', cached: true }} />
    <LayerRow layer={{ id: 4, name: 'particle back', time: '1ms', cached: true, bar: 'w-[15px]' }} />
  </div>
);

const Bar = ({ red }: { red?: boolean }) =>
  red ? (
    <div className={`${ROW} bg-[#4b4b4b] pl-[7px]`}>
      <div className="h-[17px] flex-1 border-t border-[#b47c7c] bg-[#84393d]" />
    </div>
  ) : (
    <div className={`${ROW} bg-[#303030] pl-[7px]`}>
      <div className="h-[17px] w-[87px] border-b-2 border-[#3d4257] bg-[#4e5879]" />
      <div className="h-[17px] flex-1 border-b-2 border-[#30344a] bg-[#434b70]" />
    </div>
  );

const PropertyTrack = () => (
  <div className={`${ROW} relative pl-[7px]`}>
    <div className="h-full w-[87px] bg-[#4b4b4b]" />
    <div className="h-full flex-1 bg-[#262626]" />
    <svg className="absolute top-[4px] left-[4px] z-10 h-[10px] w-[7px]" viewBox="0 0 7 10" fill="none" stroke="#c8c8c8">
      <path d="M.5.5h6M.5 9.500h6M3.500.5v9" />
    </svg>
  </div>
);

const TrackColumn = () => (
  <div className="relative flex min-w-0 flex-1 flex-col border-l border-black pt-[6px]">
    <div className="flex h-[9px] border-b border-black">
      <span className="mr-px h-2 w-[6px] rounded-l-full bg-[#3f96f5]" />
      <span className="h-2 flex-1 bg-[#686868]" />
    </div>
    <div className="flex h-5 overflow-hidden border-b border-black pl-[7px] text-[11px] text-[#b0b0b0]">
      <div className="w-[11.9%] shrink-0">
        <div className="-ml-[13px] w-8 leading-[10px]">0:00f</div>
      </div>
      {TIMES.map((t) => (
        <div key={t} className="w-[11.9%] shrink-0">
          <div className="-ml-5 h-[11px] w-10 text-center leading-[10px]">{t}</div>
          <div className="h-2 w-px bg-[#8c8c8c]" />
        </div>
      ))}
    </div>
    <div className="flex h-4 border-b border-black">
      <span className="mr-px h-[15px] w-[6px] rounded-l-[4px] bg-[#3f96f5]" />
      <span className="flex-1 bg-[#474747]" />
    </div>
    <div className="flex h-1 border-b border-black pl-[7px]">
      <span className="flex-1 bg-[#24ad32]" />
    </div>
    <Bar red />
    <Bar />
    {Array.from({ length: 9 }, (_, i) => (
      <PropertyTrack key={i} />
    ))}
    <Bar />
    <Bar />
    <div className="absolute top-5 bottom-0 left-[2px] flex w-[11px] flex-col items-center">
      <svg className="h-[14px] w-[11px] shrink-0" viewBox="0 0 11 14">
        <path d="M0 0h11v6.500c0 2.500-3 4.500-5.500 7.500C3 11 0 9 0 6.500z" fill="#3f96f5" />
        <path d="M5.500 6v8" stroke="#1b4d86" />
      </svg>
      <span className="w-px flex-1 bg-[#4a9bf0]" />
    </div>
  </div>
);

const Timeline = () => (
  <section className="ml-px shrink-0 bg-[#1e1e1e] text-[11px] leading-4 text-[#b4b4b4]">
    <div className="flex h-6 items-start">
      {['時計', '星空', '流れ星'].map((name) => (
        <button key={name} className="flex h-6 w-[100px] items-center gap-3 pl-[26px]">
          <Swatch />
          {name}
        </button>
      ))}
      <div className="ml-[22px] flex h-6 items-center border-b border-[#d8d8d8] text-[10px] text-[#d8d8d8]">
        <button className="w-[15px] text-left text-[11px]">×</button>
        <Swatch />
        <span className="mr-1 ml-[10px]">光くるくる</span>
        <Burger />
      </div>
    </div>
    <div className="flex">
      <LayerColumn />
      <TrackColumn />
    </div>
    <div className="flex h-[5px]">
      <span className="w-[741px]" />
      <span className="flex flex-1 border-l border-black pl-[7px]">
        <span className="w-[87px] border-l border-[#4a9bf0] bg-[#4b4b4b]" />
        <span className="flex-1 bg-[#262626]" />
      </span>
    </div>
  </section>
);

const BackWindow = () => (
  <aside className="flex w-[19px] shrink-0 flex-col overflow-hidden border-r border-[#777] bg-linear-to-r from-[#f4f4f4] to-[#c9c9c9] text-[11px] whitespace-nowrap text-[#333]">
    <div className="h-9 overflow-hidden border-b border-[#ddd] pt-2 pl-px leading-4">ファ</div>
    <div className="mt-[21px] ml-4 h-[46px] w-8 shrink-0 rounded-[4px] border border-[#1a6fb5]" />
    <div className="mt-[18px] h-[24px] overflow-hidden border-b border-[#ccc] leading-4 text-[#666]">選択</div>
  </aside>
);

const App: React.FC = () => {
  return (
    <div className="flex h-screen w-full overflow-hidden bg-black font-['Liberation_Sans','Noto_Sans_CJK_JP',sans-serif]">
      <BackWindow />
      <div className="flex min-w-0 flex-1 flex-col">
        <div className="h-[11px] shrink-0 bg-[#f3f3f3]">
          <svg className="h-[3px] w-[620px]" viewBox="0 0 620 3">
            <path d="M8 0h12v1.500q0 .5-1 .5H9q-1 0-1-.5z" fill="#00005b" />
            <path d="M186 .5h1M221 .5h1M238 .5h2M302 .5h242" stroke="#222" strokeDasharray="3 4 1 3 5 3" />
            <path d="M608.500 0v3" stroke="#777" />
          </svg>
        </div>
        <nav className="flex h-5 shrink-0 items-center bg-white pl-[6px] text-[10px] whitespace-nowrap text-[#111]">
          {MENUS.map((m) => (
            <button key={m.label} className={`shrink-0 text-left ${m.width}`}>{m.label}</button>
          ))}
        </nav>
        <Toolbar />
        <main className="mt-[2px] flex min-h-0 flex-1 gap-1 pl-px">
          <ProjectPanel />
          <CompPanel />
          <SidePanels />
        </main>
        <div className="h-1 shrink-0" />
        <Timeline />
      </div>
    </div>
  );
};

export default App;
